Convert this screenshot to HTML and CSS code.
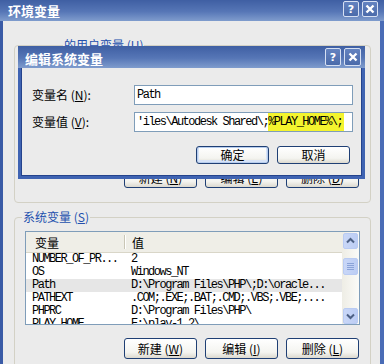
FILE: index.html
```html
<!DOCTYPE html>
<html lang="zh">
<head>
<meta charset="utf-8">
<title>环境变量</title>
<link rel="stylesheet" href="styles.css">
</head>
<body>
<div class="win">
  <div class="titlebar">
    <span class="title">环境变量</span>
    <div class="tbtns">
      <span class="tbtn q">?</span>
      <span class="tbtn"><svg width="10" height="10" viewBox="0 0 10 10"><path d="M1.5 1.5 L8.5 8.5 M8.5 1.5 L1.5 8.5" stroke="#fff" stroke-width="2.4" fill="none"/></svg></span>
    </div>
  </div>
  <div class="body">
    <fieldset class="group user">
      <legend>的用户变量 (<u>U</u>)</legend>
      <div class="ulist"></div>
      <div class="btnrow">
        <span class="btn">新建 (<u>N</u>)</span>
        <span class="btn">编辑 (<u>E</u>)</span>
        <span class="btn">删除 (<u>D</u>)</span>
      </div>
    </fieldset>
    <fieldset class="group sys">
      <legend>系统变量 (<u>S</u>)</legend>
      <div class="list">
        <div class="lmain">
          <div class="lhead">
            <span class="hcell">变量<i class="hdiv"></i></span>
            <span class="hcell h2">值</span>
          </div>
          <div class="row"><span>NUMBER_OF_PR...</span><span>2</span></div>
          <div class="row"><span>OS</span><span>Windows_NT</span></div>
          <div class="row sel"><span>Path</span><span>D:\Program Files\PHP\;D:\oracle...</span></div>
          <div class="row"><span>PATHEXT</span><span>.COM;.EXE;.BAT;.CMD;.VBS;.VBE;....</span></div>
          <div class="row"><span>PHPRC</span><span>D:\Program Files\PHP\</span></div>
          <div class="row"><span>PLAY_HOME</span><span>E:\play-1.2\</span></div>
        </div>
        <div class="sb">
          <span class="sbbtn"><svg width="15" height="16" viewBox="0 0 15 16"><path d="M4 9.5 L7.5 6 L11 9.5" stroke="#4d6185" stroke-width="2" fill="none"/></svg></span>
          <span class="thumb"><i></i><i></i><i></i><i></i></span>
          <span class="sbspace"></span>
          <span class="sbbtn"><svg width="15" height="16" viewBox="0 0 15 16"><path d="M4 6.5 L7.5 10 L11 6.5" stroke="#4d6185" stroke-width="2" fill="none"/></svg></span>
        </div>
      </div>
      <div class="btnrow">
        <span class="btn">新建 (<u>W</u>)</span>
        <span class="btn">编辑 (<u>I</u>)</span>
        <span class="btn">删除 (<u>L</u>)</span>
      </div>
    </fieldset>
  </div>

  <div class="dialog">
    <div class="titlebar dtitle">
      <span class="title">编辑系统变量</span>
      <div class="tbtns">
        <span class="tbtn q">?</span>
        <span class="tbtn"><svg width="10" height="10" viewBox="0 0 10 10"><path d="M1.5 1.5 L8.5 8.5 M8.5 1.5 L1.5 8.5" stroke="#fff" stroke-width="2.4" fill="none"/></svg></span>
      </div>
    </div>
    <div class="dbody">
      <div class="frow">
        <span class="lbl">变量名 (<u>N</u>):</span>
        <div class="field"><span class="ftext">Path</span></div>
      </div>
      <div class="frow">
        <span class="lbl">变量值 (<u>V</u>):</span>
        <div class="field"><span class="ftext">'iles\Autodesk Shared\;</span><span class="ftext hl">%PLAY_HOME%\;</span></div>
      </div>
      <div class="btnrow dbtns">
        <span class="btn dbtn def">确定</span>
        <span class="btn dbtn">取消</span>
      </div>
    </div>
  </div>
</div>
</body>
</html>
```
FILE: styles.css
```css
* { box-sizing: border-box; }
html, body { margin: 0; padding: 0; }
body {
  width: 384px;
  height: 364px;
  overflow: hidden;
  font-family: "Noto Sans CJK SC", "Noto Sans", sans-serif;
  font-size: 12px;
  color: #000;
}
u { text-decoration: underline; }

.win {
  position: relative;
  width: 384px;
  height: 364px;
  display: flex;
  flex-direction: column;
  background: linear-gradient(90deg, #3a5ba6, #4a6cb6);
  overflow: hidden;
}

.titlebar {
  height: 21px;
  flex: none;
  display: flex;
  justify-content: space-between;
  align-items: flex-start;
  background: linear-gradient(#3f5fa3, #5676b6 55%, #7f9ccd);
  color: #fff;
}
.title {
  font-weight: 700;
  font-size: 13px;
  line-height: 13px;
  padding: 4px 0 0 8px;
}
.tbtns {
  display: flex;
  gap: 3px;
  padding: 1px 6px 0 0;
}
.tbtn {
  width: 16px;
  height: 16px;
  border: 1px solid #d6e0f3;
  border-radius: 2px;
  background: linear-gradient(#6483c0, #4b6baa);
  display: flex;
  align-items: center;
  justify-content: center;
  color: #fff;
}
.tbtn.q {
  font: bold 11px/1 "DejaVu Sans", sans-serif;
}

.body {
  flex: 1;
  min-height: 0;
  margin: 0 4px 0 3px;
  background: #ebebeb;
  display: flex;
  flex-direction: column;
}

.group {
  margin: 0 0 0 11px;
  width: 357px;
  min-inline-size: 0;
  border: 1px solid #d3d1c5;
  border-radius: 4px;
  padding: 0 10px 14px;
  flex: none;
}
.group legend {
  padding: 0 1px;
  font-size: 12px;
  line-height: 12px;
  color: #2350ae;
}
.user { margin-top: 18px; }
.user legend { margin-left: 38px; }
.sys { margin-top: 8px; }
.sys legend { margin-left: -3px; }

.ulist {
  margin-top: 8px;
  height: 95px;
  border: 1px solid #7f9db9;
  background: #fff;
}

.btnrow {
  display: flex;
  justify-content: flex-end;
  gap: 8px;
  margin-top: 13px;
  padding-right: 1px;
}
.btn {
  width: 73px;
  height: 21px;
  border: 1px solid #1f3f74;
  border-radius: 3px;
  background: linear-gradient(#ffffff, #f4f4f0 70%, #dcd9cf);
  display: flex;
  align-items: center;
  justify-content: center;
  font-size: 12px;
  line-height: 14px;
}

.list {
  display: flex;
  margin-top: 8px;
  height: 94px;
  border: 1px solid #7f9db9;
  background: #fff;
}
.lmain {
  flex: 1;
  min-width: 0;
  display: flex;
  flex-direction: column;
  overflow: hidden;
}
.lhead {
  height: 21px;
  flex: none;
  display: grid;
  grid-template-columns: 100px 1fr;
  background: #efeee7;
  border-bottom: 1px solid #d9d6c8;
}
.hcell {
  display: flex;
  align-items: center;
  justify-content: space-between;
  padding-left: 9px;
  font-size: 12px;
}
.hcell.h2 { padding-left: 6px; }
.hdiv {
  width: 2px;
  height: 14px;
  border-left: 1px solid #c9c6b6;
  border-right: 1px solid #fff;
}
.row {
  height: 13px;
  flex: none;
  display: grid;
  grid-template-columns: 100px 1fr;
  font-family: "Liberation Mono", monospace;
  font-size: 12px;
  line-height: 13px;
  letter-spacing: -1.5px;
  white-space: nowrap;
}
.row span { overflow: hidden; padding-left: 6px; }
.row span + span { padding-left: 5px; }
.row.sel { background: #e6e6e6; }

.sb {
  width: 17px;
  flex: none;
  display: flex;
  flex-direction: column;
  padding: 1px 1px 0 1px;
  background: linear-gradient(90deg, #eeede5, #fbfbf8);
}
.sbbtn, .thumb {
  width: 15px;
  height: 16px;
  flex: none;
  border: 1px solid #b9cbf3;
  border-radius: 2px;
  background: linear-gradient(90deg, #c9d7f7, #bccdf4);
  display: flex;
  align-items: center;
  justify-content: center;
}
.sbbtn svg { display: block; margin: -1px; }
.thumb {
  margin-top: 9px;
  height: 17px;
  flex-direction: column;
  gap: 1px;
}
.thumb i {
  width: 7px;
  height: 1px;
  background: #8aa3d8;
}
.sbspace { flex: 1; }

.dialog {
  position: absolute;
  left: 18px;
  top: 46px;
  width: 347px;
  height: 133px;
  display: flex;
  flex-direction: column;
  border: 3px solid #3f63b2;
  border-top: 0;
  background: #ebebeb;
  box-shadow: inset 0 0 0 1px #24438c;
}
.dtitle {
  height: 22px;
  margin: 0 -3px;
}
.dtitle .title { padding: 6px 0 0 7px; }
.dtitle .tbtns { padding: 2px 4px 0 0; }
.dtitle .tbtn { height: 18px; width: 17px; }
.dtitle .tbtn.q { width: 16px; }

.dbody {
  flex: 1;
  display: flex;
  flex-direction: column;
  gap: 7px;
  padding: 17px 9px 0 11px;
}
.frow {
  display: grid;
  grid-template-columns: 102px 1fr;
  align-items: center;
  height: 20px;
}
.lbl { font-size: 12px; line-height: 14px; }
.field {
  height: 20px;
  border: 1px solid #7f9db9;
  background: #fff;
  display: flex;
  align-items: stretch;
  padding-left: 2px;
  overflow: hidden;
  white-space: nowrap;
}
.ftext {
  font-family: "Liberation Mono", monospace;
  font-size: 12px;
  line-height: 18px;
  letter-spacing: -1.5px;
}
.hl { background: #f4f42e; padding-right: 2px; }

.dbtns {
  margin-top: 7px;
  padding-right: 3px;
}
.dbtn { height: 18px; }
.dbtn.def { box-shadow: inset 0 0 0 1px #b7cdee, inset 0 -1px 0 2px #d7e3f7; }
```
